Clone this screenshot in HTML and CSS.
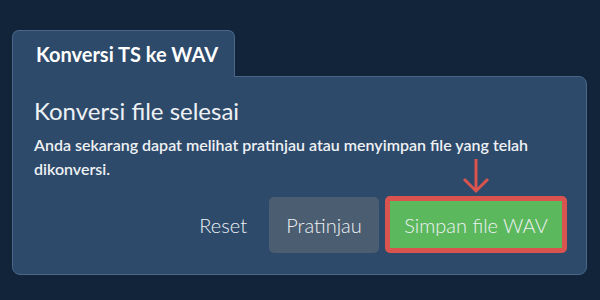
FILE: index.html
```html
<!DOCTYPE html>
<html>
<head>
  <meta charset="utf-8">
  <link rel="stylesheet" href="styles.css">
</head>
<body>
  <div class="wrapper">
    <div class="tab">Konversi TS ke WAV</div>
    <div class="panel">
      <div class="panel-title">Konversi file selesai</div>
      <div class="panel-text">Anda sekarang dapat melihat pratinjau atau menyimpan file yang telah dikonversi.</div>
      <div class="actions">
        <button class="btn btn-link">Reset</button>
        <button class="btn btn-gray">Pratinjau</button>
        <div class="save-wrap">
          <svg class="arrow" width="30" height="36" viewBox="0 0 30 36">
            <path d="M15 1 L15 33 M3 21 L15 33 L27 21" fill="none" stroke="#d9534f" stroke-width="3"/>
          </svg>
          <button class="btn btn-green">Simpan file WAV</button>
        </div>
      </div>
    </div>
  </div>
</body>
</html>
```

FILE: styles.css
```css
body {
  margin: 0;
  width: 600px;
  height: 300px;
  background: #12243a;
  font-family: Lato, 'Noto Sans', sans-serif;
  color: #eef1f4;
}

.wrapper {
  padding: 30px 13px 0 12px;
}

.tab {
  position: relative;
  z-index: 1;
  width: 198px;
  height: 46px;
  padding-left: 23px;
  margin-bottom: -1px;
  box-sizing: content-box;
  background: #2d4a6a;
  border: 1px solid #4a6688;
  border-bottom: none;
  border-radius: 7px 7px 0 0;
  font-size: 20px;
  font-weight: bold;
  line-height: 46px;
  color: #ffffff;
}

.panel {
  background: #2d4a6a;
  border: 1px solid #4a6688;
  border-radius: 0 8px 8px 8px;
  padding: 19px 19px 21px 21px;
}

.panel-title {
  font-size: 24px;
  line-height: 30px;
  margin-bottom: 7px;
}

.panel-text {
  font-size: 16px;
  font-weight: 600;
  line-height: 24px;
}

.actions {
  display: flex;
  justify-content: flex-end;
  align-items: center;
  gap: 6px;
  margin-top: 15px;
}

.btn {
  font-family: Lato, 'Noto Sans', sans-serif;
  font-size: 20px;
  font-weight: 300;
  color: #eef1f4;
  border: none;
  cursor: pointer;
}

.btn-link {
  background: none;
  height: 56px;
  padding: 0 16px;
}

.btn-gray {
  background: #4b5d70;
  border-radius: 5px;
  width: 110px;
  height: 56px;
}

.save-wrap {
  position: relative;
}

.arrow {
  position: absolute;
  left: 76px;
  top: -38px;
}

.btn-green {
  background: #5cb85c;
  border: 5px solid #d9534f;
  border-radius: 5px;
  width: 182px;
  height: 57px;
}
```
